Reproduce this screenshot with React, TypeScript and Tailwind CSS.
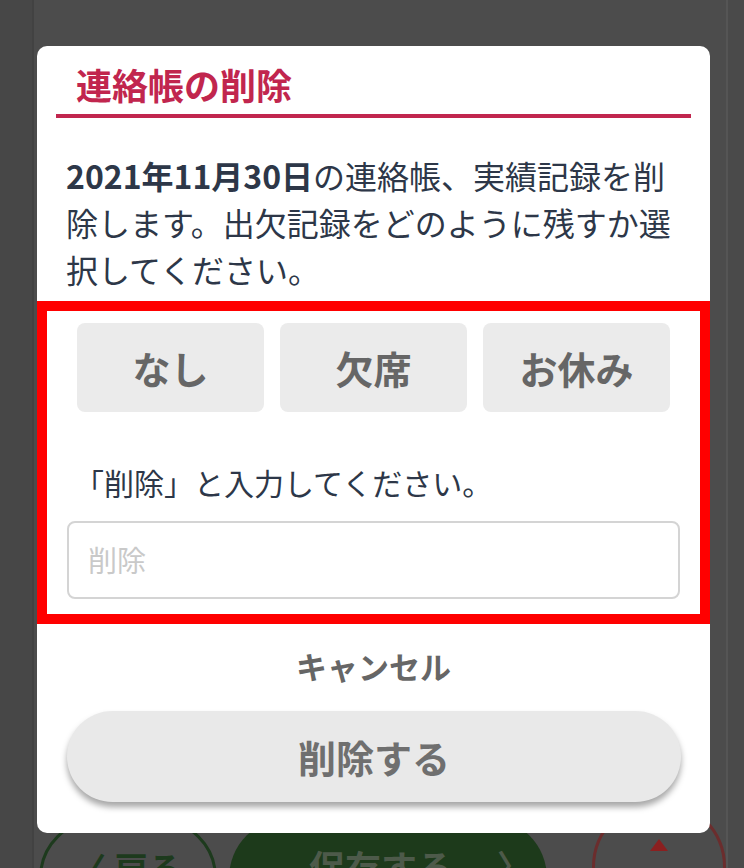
import React from "react";

export default function App() {
  return (
    <div
      className="relative w-[744px] h-[868px] overflow-hidden bg-[#474747]"
      style={{ fontFamily: '"Noto Sans CJK JP", "Noto Sans", sans-serif' }}
    >
      {/* Page behind the overlay */}
      <div className="flex h-full">
        <div className="w-[34px] shrink-0 bg-[#474747] border-r-[2px] border-[#424242]" />
        <div className="flex-1 bg-[#4c4c4c] flex flex-col justify-end">
          <div className="flex items-start gap-[12px] pl-[5px] pr-0 h-[60px]">
            <div className="w-[178px] h-[120px] shrink-0 rounded-full border-[3px] border-[#1d3a1d] flex items-start justify-center gap-[8px] pt-[30px] mt-[10px]">
              <span className="text-[32px] font-bold text-[#1d3a1d] leading-none">〈</span>
              <span className="text-[34px] font-bold text-[#1d3a1d] leading-none">戻る</span>
            </div>
            <div className="w-[318px] h-[120px] shrink-0 rounded-full bg-[#1d3a1b] flex items-start justify-start pl-[80px] gap-[44px] pt-[30px] mt-[10px]">
              <span className="text-[36px] font-bold text-[#4d5a4a] leading-none">保存する</span>
              <span className="text-[32px] font-bold text-[#4d5a4a] leading-none">〉</span>
            </div>
            <div className="ml-[33px] w-[134px] h-[134px] shrink-0 rounded-full border-[3px] border-[#6b2d2d] flex items-start justify-center pt-[36px] mt-[-8px]">
              <div className="w-0 h-0 border-l-[9px] border-r-[9px] border-b-[12px] border-l-transparent border-r-transparent border-b-[#8b2020]" />
            </div>
          </div>
        </div>
        <div className="w-[36px] shrink-0 bg-[#4a4a4a] border-l-[2px] border-[#555555]" />
      </div>

      {/* Dialog overlay */}
      <div className="absolute left-[37px] top-[46px] w-[673px] h-[787px] bg-white rounded-[10px] flex flex-col">
        <div className="pt-[12px] px-[19px]">
          <div className="pl-[20px] text-[36px] font-bold text-[#c1264e] leading-[52px]">
            連絡帳の削除
          </div>
          <div className="mt-[4px] h-[4px] bg-[#c1264e]" />
        </div>

        <div className="px-[29px] pt-[34px] pb-[8px] text-[32px] leading-[47px] text-[#2d3748]">
          <span className="font-bold">2021年11月30日</span>
          の連絡帳、実績記録を削除します。出欠記録をどのように残すか選択してください。
        </div>

        <div className="border-[10px] border-[#ff0000] h-[323px] flex flex-col">
          <div className="grid grid-cols-3 gap-[16px] pl-[30px] pr-[30px] pt-[12px]">
            {["なし", "欠席", "お休み"].map((t) => (
              <div
                key={t}
                className="h-[89px] rounded-[8px] bg-[#ebebeb] flex items-center justify-center text-[38px] font-bold text-[#666666]"
              >
                {t}
              </div>
            ))}
          </div>
          <div className="pl-[27px] mt-[48px] text-[30px] leading-[44px] text-[#2d3748]">
            「削除」と入力してください。
          </div>
          <div className="px-[20px] mt-[17px]">
            <div className="h-[78px] rounded-[8px] border-[2px] border-[#d4d4d4] flex items-center pl-[19px] text-[29px] text-[#c9c9c9]">
              削除
            </div>
          </div>
        </div>

        <div className="flex justify-center pt-[22px] text-[31px] font-bold text-[#666666] leading-[40px]">
          キャンセル
        </div>

        <div className="px-[30px] pr-[29px] mt-[25px]">
          <div className="h-[91px] rounded-full bg-[#e9e9e9] shadow-[0_5px_6px_rgba(0,0,0,0.35)] flex items-center justify-center text-[38px] font-bold text-[#6f6f6f]">
            削除する
          </div>
        </div>
      </div>
    </div>
  );
}
